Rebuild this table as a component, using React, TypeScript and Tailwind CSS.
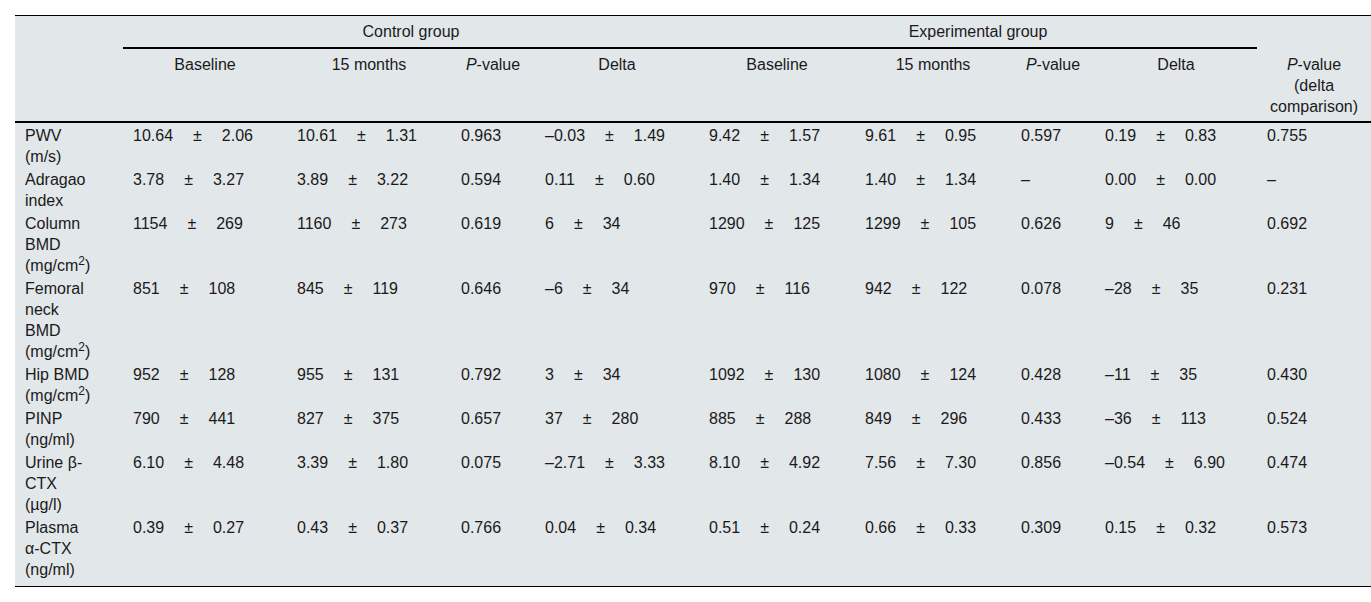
import type { ReactNode } from "react";

type Pair = [string, string];

type Row = {
  label: ReactNode[];
  control: [Pair, Pair, string, Pair];
  experimental: [Pair, Pair, string, Pair];
  delta: string;
};

const cm2 = (
  <>
    (mg/cm<sup>2</sup>)
  </>
);

const rows: Row[] = [
  {
    label: ["PWV", "(m/s)"],
    control: [["10.64", "2.06"], ["10.61", "1.31"], "0.963", ["–0.03", "1.49"]],
    experimental: [["9.42", "1.57"], ["9.61", "0.95"], "0.597", ["0.19", "0.83"]],
    delta: "0.755",
  },
  {
    label: ["Adragao", "index"],
    control: [["3.78", "3.27"], ["3.89", "3.22"], "0.594", ["0.11", "0.60"]],
    experimental: [["1.40", "1.34"], ["1.40", "1.34"], "–", ["0.00", "0.00"]],
    delta: "–",
  },
  {
    label: ["Column", "BMD", cm2],
    control: [["1154", "269"], ["1160", "273"], "0.619", ["6", "34"]],
    experimental: [["1290", "125"], ["1299", "105"], "0.626", ["9", "46"]],
    delta: "0.692",
  },
  {
    label: ["Femoral", "neck", "BMD", cm2],
    control: [["851", "108"], ["845", "119"], "0.646", ["–6", "34"]],
    experimental: [["970", "116"], ["942", "122"], "0.078", ["–28", "35"]],
    delta: "0.231",
  },
  {
    label: ["Hip BMD", cm2],
    control: [["952", "128"], ["955", "131"], "0.792", ["3", "34"]],
    experimental: [["1092", "130"], ["1080", "124"], "0.428", ["–11", "35"]],
    delta: "0.430",
  },
  {
    label: ["PINP", "(ng/ml)"],
    control: [["790", "441"], ["827", "375"], "0.657", ["37", "280"]],
    experimental: [["885", "288"], ["849", "296"], "0.433", ["–36", "113"]],
    delta: "0.524",
  },
  {
    label: ["Urine β-", "CTX", "(µg/l)"],
    control: [["6.10", "4.48"], ["3.39", "1.80"], "0.075", ["–2.71", "3.33"]],
    experimental: [["8.10", "4.92"], ["7.56", "7.30"], "0.856", ["–0.54", "6.90"]],
    delta: "0.474",
  },
  {
    label: ["Plasma", "α-CTX", "(ng/ml)"],
    control: [["0.39", "0.27"], ["0.43", "0.37"], "0.766", ["0.04", "0.34"]],
    experimental: [["0.51", "0.24"], ["0.66", "0.33"], "0.309", ["0.15", "0.32"]],
    delta: "0.573",
  },
];

function MeanSd({ pair }: { pair: Pair }) {
  return (
    <span className="whitespace-nowrap">
      {pair[0]}
      <span className="mx-5">±</span>
      {pair[1]}
    </span>
  );
}

function Lines({ lines }: { lines: ReactNode[] }) {
  return (
    <>
      {lines.map((line, i) => (
        <div key={i}>{line}</div>
      ))}
    </>
  );
}

export default function App() {
  const head = "border-b-2 border-black px-[10px] text-center font-normal align-top";
  return (
    <div
      className="min-h-screen bg-white pl-[15px] pt-[15px] text-[16px] leading-[21px] text-[#1a1a1a]"
      style={{ fontFamily: '"Liberation Sans", Arial, sans-serif' }}
    >
      <table className="w-[1356px] table-fixed border-separate border-spacing-0 border-t border-b border-black bg-[#e2e7ea]">
        <colgroup>
          <col className="w-[108px]" />
          <col className="w-[164px]" />
          <col className="w-[164px]" />
          <col className="w-[84px]" />
          <col className="w-[164px]" />
          <col className="w-[156px]" />
          <col className="w-[156px]" />
          <col className="w-[84px]" />
          <col className="w-[162px]" />
          <col className="w-[114px]" />
        </colgroup>
        <thead>
          <tr>
            <td />
            <th colSpan={4} className={`${head} pt-[5px] pb-[5px]`}>
              Control group
            </th>
            <th colSpan={4} className={`${head} pt-[5px] pb-[5px]`}>
              Experimental group
            </th>
            <td />
          </tr>
          <tr>
            <td className="border-b-2 border-black" />
            {["Baseline", "15 months", "P", "Delta", "Baseline", "15 months", "P", "Delta"].map(
              (h, i) => (
                <th key={i} className={`${head} pt-[5px] pb-[4px]`}>
                  {h === "P" ? (
                    <>
                      <i>P</i>-value
                    </>
                  ) : (
                    h
                  )}
                </th>
              )
            )}
            <th className={`${head} pt-[5px] pb-[4px]`}>
              <div>
                <i>P</i>-value
              </div>
              <div>(delta</div>
              <div>comparison)</div>
            </th>
          </tr>
        </thead>
        <tbody>
          {rows.map((row, r) => {
            const pad =
              r === rows.length - 1
                ? "px-[10px] pt-[2px] pb-[6px] align-top text-left"
                : "px-[10px] pt-[2px] pb-0 align-top text-left";
            return (
              <tr key={r}>
                <td className={pad}>
                  <Lines lines={row.label} />
                </td>
                {[row.control, row.experimental].map((g, gi) => (
                  <>
                    <td key={`${gi}a`} className={pad}>
                      <MeanSd pair={g[0]} />
                    </td>
                    <td key={`${gi}b`} className={pad}>
                      <MeanSd pair={g[1]} />
                    </td>
                    <td key={`${gi}c`} className={pad}>
                      {g[2]}
                    </td>
                    <td key={`${gi}d`} className={pad}>
                      <MeanSd pair={g[3]} />
                    </td>
                  </>
                ))}
                <td className={pad}>{row.delta}</td>
              </tr>
            );
          })}
        </tbody>
      </table>
    </div>
  );
}
